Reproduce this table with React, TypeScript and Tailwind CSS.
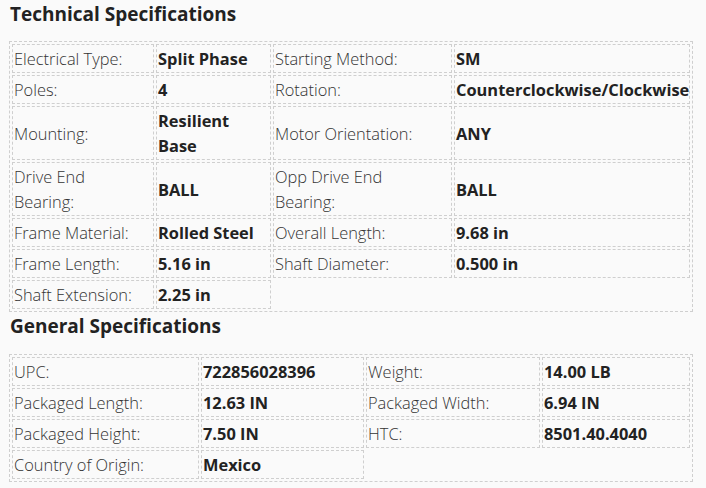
import React from "react";

type Row = [string, string, string?, string?];

const tech: Row[] = [
  ["Electrical Type:", "Split Phase", "Starting Method:", "SM"],
  ["Poles:", "4", "Rotation:", "Counterclockwise/Clockwise"],
  ["Mounting:", "Resilient\nBase", "Motor Orientation:", "ANY"],
  ["Drive End\nBearing:", "BALL", "Opp Drive End\nBearing:", "BALL"],
  ["Frame Material:", "Rolled Steel", "Overall Length:", "9.68 in"],
  ["Frame Length:", "5.16 in", "Shaft Diameter:", "0.500 in"],
  ["Shaft Extension:", "2.25 in"],
];

const general: Row[] = [
  ["UPC:", "722856028396", "Weight:", "14.00 LB"],
  ["Packaged Length:", "12.63 IN", "Packaged Width:", "6.94 IN"],
  ["Packaged Height:", "7.50 IN", "HTC:", "8501.40.4040"],
  ["Country of Origin:", "Mexico"],
];

function Lines({ text }: { text: string }) {
  const parts = text.split("\n");
  return (
    <>
      {parts.map((p, i) => (
        <React.Fragment key={i}>
          {i > 0 && <br />}
          {p}
        </React.Fragment>
      ))}
    </>
  );
}

function SpecTable({ rows, widths }: { rows: Row[]; widths: string[] }) {
  return (
    <table className="w-[684px] table-fixed border-separate border-spacing-[2px] border border-dashed border-[#cfcfcf]">
      <colgroup>
        {widths.map((w, i) => (
          <col key={i} className={w} />
        ))}
      </colgroup>
      <tbody>
        {rows.map((r, ri) => (
          <tr key={ri}>
            {r.map((c, ci) =>
              c === undefined ? null : (
                <td
                  key={ci}
                  className={
                    "border border-dashed border-[#cfcfcf] p-px align-middle whitespace-nowrap " +
                    (ci % 2 === 0
                      ? "font-light text-[#333333]"
                      : "font-bold text-[#222222]")
                  }
                >
                  <Lines text={c} />
                </td>
              )
            )}
          </tr>
        ))}
      </tbody>
    </table>
  );
}

export default function App() {
  return (
    <div
      className="min-h-[488px] w-[706px] bg-[#fafafa] pl-[9px] text-[16.4px] leading-[25px]"
      style={{ fontFamily: '"Segoe UI", "Open Sans", "Noto Sans", sans-serif' }}
    >
      <h2 className="mb-[13px] pl-px text-[19px] leading-[28px] font-bold text-[#222222]">
        Technical Specifications
      </h2>
      <SpecTable
        rows={tech}
        widths={["w-[142px]", "w-[115px]", "w-[179px]", "w-[236px]"]}
      />
      <h2 className="mb-[14px] pl-px text-[19px] leading-[28px] font-bold text-[#222222]">
        General Specifications
      </h2>
      <SpecTable
        rows={general}
        widths={["w-[187px]", "w-[163px]", "w-[174px]", "w-[148px]"]}
      />
    </div>
  );
}
